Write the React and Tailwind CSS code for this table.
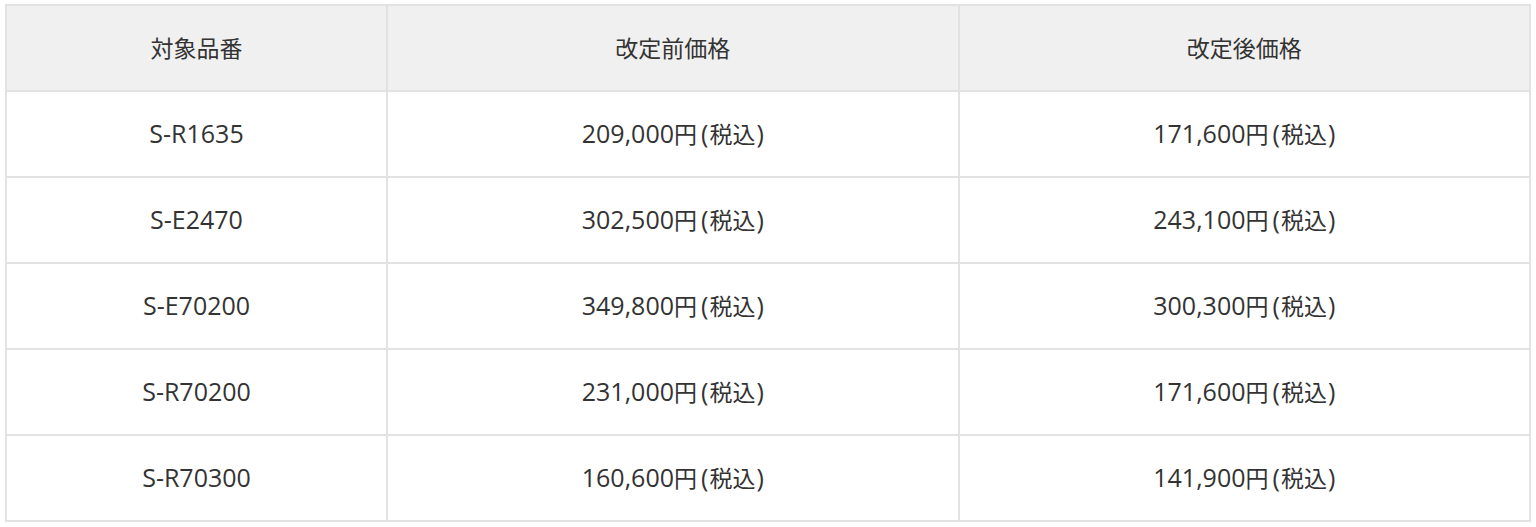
const ROWS = [
  ['S-R1635', '209,000', '171,600'],
  ['S-E2470', '302,500', '243,100'],
  ['S-E70200', '349,800', '300,300'],
  ['S-R70200', '231,000', '171,600'],
  ['S-R70300', '160,600', '141,900'],
]

function Price({ value }) {
  return (
    <>
      {value}
      <span className="text-[23px]">
        円<span className="ml-[4px] mr-[1px] text-[25px]">(</span>税込<span className="ml-[1px] text-[25px]">)</span>
      </span>
    </>
  )
}

export default function App() {
  return (
    <div
      className="bg-white pl-[5px] pt-[4px] text-[#333]"
      style={{ fontFamily: '"Open Sans", "Noto Sans CJK JP", sans-serif' }}
    >
      <table className="w-[1526px] border-collapse border-2 border-[#e2e2e2] table-fixed">
        <colgroup>
          <col className="w-[25%]" />
          <col className="w-[37.5%]" />
          <col className="w-[37.5%]" />
        </colgroup>
        <thead>
          <tr className="bg-[#f0f0f0] h-[86px] text-[23px]">
            <th className="border-2 border-[#e2e2e2] font-normal text-center">対象品番</th>
            <th className="border-2 border-[#e2e2e2] font-normal text-center">改定前価格</th>
            <th className="border-2 border-[#e2e2e2] font-normal text-center">改定後価格</th>
          </tr>
        </thead>
        <tbody>
          {ROWS.map((r) => (
            <tr key={r[0]} className="h-[86px] text-[25px]">
              <td className="border-2 border-[#e2e2e2] text-center">{r[0]}</td>
              <td className="border-2 border-[#e2e2e2] text-center">
                <Price value={r[1]} />
              </td>
              <td className="border-2 border-[#e2e2e2] text-center">
                <Price value={r[2]} />
              </td>
            </tr>
          ))}
        </tbody>
      </table>
    </div>
  )
}
